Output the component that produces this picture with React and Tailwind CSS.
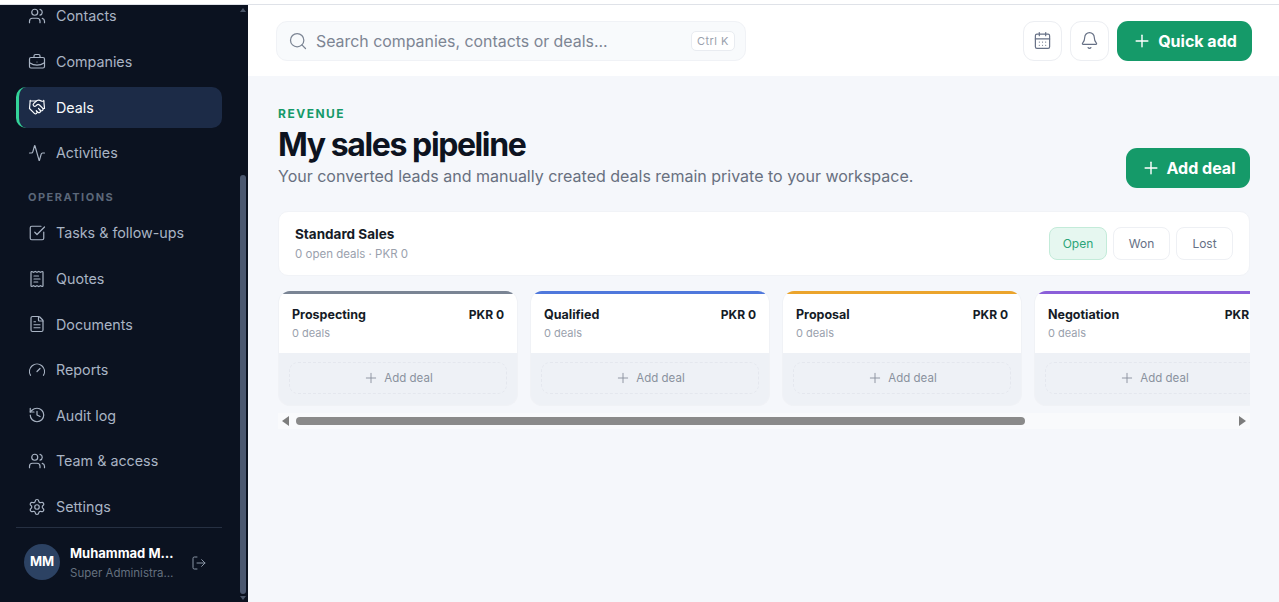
import React from 'react';
import {
  Users, BriefcaseBusiness, Handshake, Activity, SquareCheckBig, ReceiptText, FileText, Gauge, History,
  Settings, LogOut, Search, CalendarDays, Bell, Plus,
} from 'lucide-react';

const font = { fontFamily: 'Inter, "Liberation Sans", sans-serif' };

const NavItem = ({ icon: Icon, label, active }) => (
  <div
    className={
      active
        ? 'flex h-[41px] items-center gap-[10px] rounded-[10px] border-l-[3px] border-[#34d399] bg-[#1c2b47] pl-[9px] text-[#f8fafc]'
        : 'flex h-[41px] items-center gap-[10px] rounded-[10px] pl-[12px] text-[#a9b4c4]'
    }
  >
    <Icon size={18} strokeWidth={1.6} />
    <span className="text-[14.3px]">{label}</span>
  </div>
);

const Sidebar = () => (
  <aside className="flex h-full w-[248px] shrink-0 bg-[#0b1220]">
    <div className="flex min-w-0 flex-1 flex-col pl-4 pr-[17px]">
      <div className="min-h-0 flex-1 overflow-hidden">
        <nav className="-mt-[9.4px] flex flex-col gap-[4.6px]">
          <NavItem icon={Users} label="Contacts" />
          <NavItem icon={BriefcaseBusiness} label="Companies" />
          <NavItem icon={Handshake} label="Deals" active />
          <NavItem icon={Activity} label="Activities" />
          <div className="pl-3 pt-[11px] pb-[2px] text-[11px] leading-[17px] font-bold tracking-[1.5px] text-[#5b6779]">OPERATIONS</div>
          <NavItem icon={SquareCheckBig} label="Tasks & follow-ups" />
          <NavItem icon={ReceiptText} label="Quotes" />
          <NavItem icon={FileText} label="Documents" />
          <NavItem icon={Gauge} label="Reports" />
          <NavItem icon={History} label="Audit log" />
          <NavItem icon={Users} label="Team & access" />
          <NavItem icon={Settings} label="Settings" />
        </nav>
      </div>
      <div className="flex h-[75px] items-start gap-[10px] border-t border-[#263042] pt-4 pl-2">
        <div className="flex h-9 w-9 shrink-0 items-center justify-center rounded-full bg-[#2c4263] text-[13px] font-bold text-white">MM</div>
        <div className="w-[105px] min-w-0">
          <div className="truncate text-[13px] leading-[18px] font-bold text-white">Muhammad Mubeen</div>
          <div className="truncate pt-[3px] text-[11.5px] leading-[16px] text-[#64707f]">Super Administrator</div>
        </div>
        <LogOut size={16} strokeWidth={1.5} className="mt-[11px] ml-[6px] text-[#8a95a5]" />
      </div>
    </div>
    <div className="mr-[1px] flex w-2 shrink-0 flex-col items-center pb-[2px]">
      <div className="mt-[3px] h-0 w-0 border-x-[3px] border-b-[4px] border-x-transparent border-b-[#4a5568]" />
      <div className="mt-[163px] w-[6px] flex-1 rounded-[3px] bg-[#4b5870]" />
      <div className="mt-[2px] h-0 w-0 border-x-[3px] border-t-[4px] border-x-transparent border-t-[#4a5568]" />
    </div>
  </aside>
);

const Topbar = () => (
  <header className="flex h-[71px] shrink-0 items-center bg-white pr-[27px] pl-7">
    <div className="flex h-10 w-[470px] items-center rounded-[11px] border border-[#f0f2f6] bg-[#f8fafc] pr-[10px] pl-[11px]">
      <Search size={20} strokeWidth={1.5} className="text-[#7c8594]" />
      <span className="ml-[8px] flex-1 pt-[2px] text-[15.9px] text-[#7d8593]">Search companies, contacts or deals...</span>
      <span className="rounded-[5px] border border-[#e9ecf1] bg-white px-[5px] py-[1px] text-[11px] leading-[16px] tracking-[0.5px] text-[#9aa1ad]">Ctrl K</span>
    </div>
    <div className="ml-auto flex items-center gap-[8px]">
      <div className="flex h-10 w-[39px] items-center justify-center rounded-[11px] border border-[#eceef2] bg-white text-[#667085]">
        <CalendarDays size={19} strokeWidth={1.5} />
      </div>
      <div className="flex h-10 w-[39px] items-center justify-center rounded-[11px] border border-[#eceef2] bg-white text-[#667085]">
        <Bell size={19} strokeWidth={1.5} />
      </div>
      <div className="flex h-10 w-[135px] items-center justify-center gap-[6px] rounded-[11px] bg-[#159a69] text-white">
        <Plus size={20} strokeWidth={1.7} />
        <span className="text-[16px] font-bold">Quick add</span>
      </div>
    </div>
  </header>
);

const stages = [
  { name: 'Prospecting', bar: 'bg-[#7a8494]' },
  { name: 'Qualified', bar: 'bg-[#4f78dc]' },
  { name: 'Proposal', bar: 'bg-[#eba42c]' },
  { name: 'Negotiation', bar: 'bg-[#8b5fd9]' },
];

const StageColumn = ({ name, bar }) => (
  <div className="w-[240px] shrink-0 overflow-hidden rounded-[12px] border-x border-b border-[#f0f2f6] bg-[#eef1f6]">
    <div className={'h-[3px] ' + bar} />
    <div className="h-[59px] bg-white px-[13px] pt-[12px]">
      <div className="flex items-center justify-between leading-[18px] font-bold text-[#151b26]">
        <span className="text-[12.5px]">{name}</span>
        <span className="text-[12px]">PKR 0</span>
      </div>
      <div className="pt-[1px] text-[11px] leading-[16px] text-[#9aa1ad]">0 deals</div>
    </div>
    <div className="h-[52px] px-[10px] pt-[9px]">
      <div className="flex h-[32px] items-center justify-center gap-[5px] rounded-[9px] border border-dashed border-[#e4e7ee] text-[#8a919e]">
        <Plus size={16} strokeWidth={1.4} />
        <span className="pt-[2px] text-[11.5px]">Add deal</span>
      </div>
    </div>
  </div>
);

const Pill = ({ label, active }) => (
  <div
    className={
      active
        ? 'flex h-[33px] w-[58px] items-center justify-center rounded-[8px] border border-[#c3ebd9] bg-[#e6f7f0] text-[12px] text-[#2ba578]'
        : 'flex h-[33px] w-[57px] items-center justify-center rounded-[8px] border border-[#eef0f4] bg-white text-[12px] text-[#667085]'
    }
  >
    {label}
  </div>
);

const Pipeline = () => (
  <main className="min-h-0 flex-1 bg-[#f5f7fb] pt-[30px] pr-[29px] pl-[30px]">
    <div className="flex items-end justify-between">
      <div>
        <div className="text-[12px] leading-[15px] font-bold tracking-[1.5px] text-[#159a69]">REVENUE</div>
        <h1 className="pt-[4px] text-[32px] leading-[39px] font-bold tracking-[-1.4px] text-[#0d1320]">My sales pipeline</h1>
        <p className="text-[16px] leading-[24px] text-[#687080]">Your converted leads and manually created deals remain private to your workspace.</p>
      </div>
      <div className="flex h-10 w-[124px] items-center justify-center gap-[6px] rounded-[11px] bg-[#159a69] text-white">
        <Plus size={20} strokeWidth={1.7} />
        <span className="text-[16px] font-bold">Add deal</span>
      </div>
    </div>
    <div className="mt-[23px] flex h-[65px] items-center justify-between rounded-[10px] border border-[#f1f3f7] bg-white pr-[16px] pl-[16px]">
      <div>
        <div className="text-[13.5px] leading-[18px] font-bold text-[#151b26]">Standard Sales</div>
        <div className="pt-[3px] text-[11.5px] leading-[16px] text-[#9aa1ad]">0 open deals · PKR 0</div>
      </div>
      <div className="flex gap-[6px]">
        <Pill label="Open" active />
        <Pill label="Won" />
        <Pill label="Lost" />
      </div>
    </div>
    <div className="mt-[15px] flex gap-[12px] overflow-hidden">
      {stages.map((s) => (
        <StageColumn key={s.name} name={s.name} bar={s.bar} />
      ))}
    </div>
    <div className="mt-[7px] flex h-[16px] items-center bg-[#f9fafc] pr-[4px] pl-[4px]">
      <div className="h-0 w-0 border-y-[5px] border-r-[7px] border-y-transparent border-r-[#7d7d7d]" />
      <div className="ml-[7px] h-[8px] w-[729px] rounded-[4px] bg-[#8a8a8a]" />
      <div className="ml-auto h-0 w-0 border-y-[5px] border-l-[7px] border-y-transparent border-l-[#7d7d7d]" />
    </div>
  </main>
);

export default function App() {
  return (
    <div className="flex h-[602px] w-[1279px] flex-col overflow-hidden bg-white" style={font}>
      <div className="h-[5px] shrink-0 border-b border-[#dfe2e8] bg-white" />
      <div className="flex min-h-0 flex-1">
        <Sidebar />
        <div className="flex min-w-0 flex-1 flex-col">
          <Topbar />
          <Pipeline />
        </div>
      </div>
    </div>
  );
}
